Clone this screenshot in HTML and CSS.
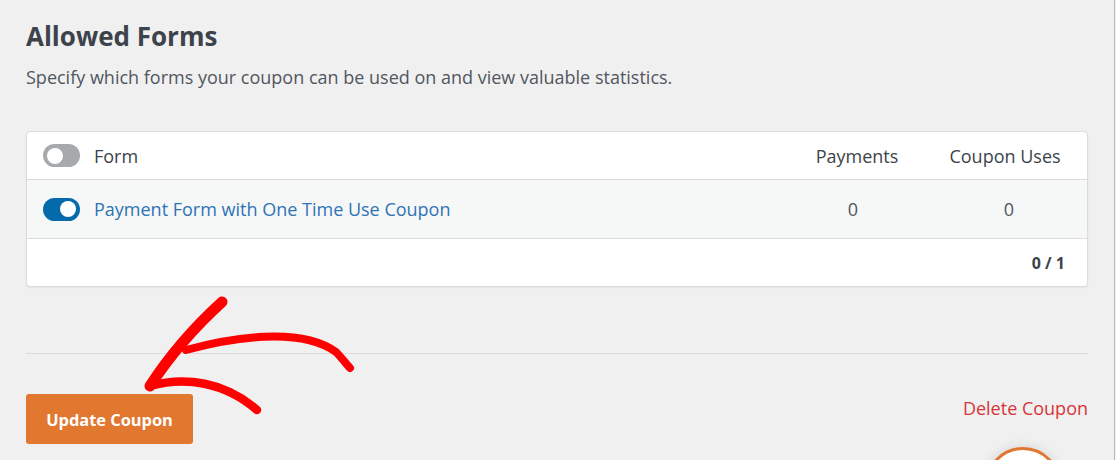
FILE: index.html
```html
<!DOCTYPE html>
<html>
<head>
<meta charset="utf-8">
<link rel="stylesheet" href="styles.css">
</head>
<body>
<div class="page">
  <section class="section">
    <h2 class="title">Allowed Forms</h2>
    <p class="desc">Specify which forms your coupon can be used on and view valuable statistics.</p>

    <div class="card">
      <div class="row head">
        <div class="cell name"><span class="toggle off"><span class="knob"></span></span><span>Form</span></div>
        <div class="cell num">Payments</div>
        <div class="cell num">Coupon Uses</div>
      </div>
      <div class="row body">
        <div class="cell name"><span class="toggle on"><span class="knob"></span></span><a class="link" href="#">Payment Form with One Time Use Coupon</a></div>
        <div class="cell num val1">0</div>
        <div class="cell num val2">0</div>
      </div>
      <div class="row foot">
        <div class="count">0 / 1</div>
      </div>
    </div>

    <hr class="divider">

    <div class="actions">
      <button class="btn">Update Coupon</button>
      <a class="delete" href="#">Delete Coupon</a>
    </div>
  </section>

  <svg class="arrow" width="1116" height="460" viewBox="0 0 1116 460">
    <path d="M222 302 C 200 322, 172 352, 150 386" fill="none" stroke="#ff0000" stroke-width="11" stroke-linecap="round"/>
    <path d="M186 350 C 230 338, 300 326, 336 352 C 342 358, 346 364, 350 368" fill="none" stroke="#ff0000" stroke-width="8" stroke-linecap="round"/>
    <path d="M150 386 C 185 376, 225 382, 257 410" fill="none" stroke="#ff0000" stroke-width="8.5" stroke-linecap="round"/>
  </svg>

  <div class="help"></div>
</div>
</body>
</html>
```
FILE: styles.css
```css
* { box-sizing: border-box; }
html, body { margin: 0; padding: 0; }
body {
  background: #f0f0f1;
  font-family: "Open Sans", "Noto Sans", sans-serif;
  color: #3c434a;
  overflow: hidden;
}
.page {
  position: relative;
  width: 1115px;
  height: 460px;
  border-right: 1px solid #b5b8bb;
  overflow: hidden;
}
.section {
  padding: 20px 0 0 26px;
  width: 1088px;
}
.title {
  margin: 0;
  font-size: 26px;
  line-height: 32px;
  font-weight: 700;
  color: #3c434a;
}
.desc {
  margin: 12px 0 0;
  font-size: 18px;
  line-height: 26px;
  color: #50575e;
}
.card {
  margin-top: 41px;
  background: #fff;
  border: 1px solid #dcdcde;
  border-radius: 4px;
  box-shadow: 0 1px 2px rgba(0,0,0,0.06);
  overflow: hidden;
}
.row {
  display: grid;
  grid-template-columns: 1fr 184px 112px;
  padding: 0 26px 0 16px;
  align-items: center;
  font-size: 18px;
}
.row.head { height: 47px; color: #3c434a; }
.row.body {
  height: 60px;
  background: #f6f7f7;
  border-top: 1px solid #dcdcde;
  border-bottom: 1px solid #dcdcde;
  color: #50575e;
}
.row.foot {
  height: 47px;
  display: flex;
  justify-content: flex-end;
  padding-right: 22px;
}
.cell.name { display: flex; align-items: center; gap: 14px; }
.cell.num { text-align: center; white-space: nowrap; }
.val1 { padding-right: 8px; }
.val2 { padding-left: 8px; }
.count { font-weight: 700; color: #3c434a; font-size: 16px; }
.toggle {
  display: inline-block;
  position: relative;
  width: 37px;
  height: 23px;
  border-radius: 12px;
  flex: none;
}
.toggle.off { background: #a7aaad; }
.toggle.on { background: #056aab; }
.knob {
  position: absolute;
  top: 3.5px;
  width: 16px;
  height: 16px;
  border-radius: 50%;
  background: #fff;
}
.toggle.off .knob { left: 4px; }
.toggle.on .knob { right: 4px; }
.link { color: #2f74b5; text-decoration: none; }
.divider {
  margin: 66px 0 0;
  border: 0;
  border-top: 1px solid #dcdcde;
}
.actions {
  margin-top: 40px;
  display: flex;
  justify-content: space-between;
  align-items: flex-start;
}
.btn {
  background: #e27730;
  border: 0;
  border-radius: 3px;
  color: #fff;
  font-family: inherit;
  font-weight: 700;
  font-size: 16.4px;
  height: 50px;
  width: 167px;
  padding: 0;
}
.delete {
  margin-top: 1px;
  color: #d63638;
  font-size: 18px;
  line-height: 26px;
  text-decoration: none;
}
.arrow {
  position: absolute;
  left: 0;
  top: 0;
  pointer-events: none;
}
.help {
  position: absolute;
  left: 985px;
  top: 447px;
  width: 76px;
  height: 76px;
  border-radius: 50%;
  background: #fff;
  border: 3px solid #e27730;
  box-shadow: 0 0 12px rgba(0,0,0,0.12);
}
```
